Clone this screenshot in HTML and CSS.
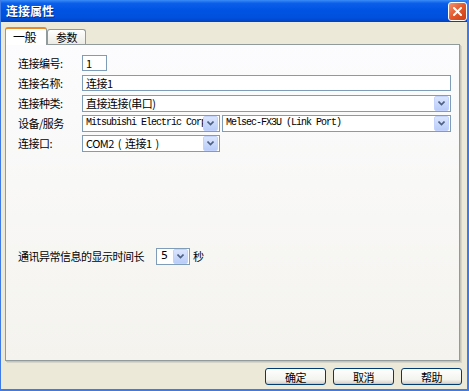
FILE: index.html
```html
<!DOCTYPE html>
<html lang="zh">
<head>
  <meta charset="UTF-8" />
  <title>连接属性</title>
  <link rel="stylesheet" href="styles.css">
</head>
<body>
  <div class="window">
    <div class="titlebar">
      <span class="title">连接属性</span>
      <span class="close">
        <svg width="9" height="9" viewBox="0 0 9 9"><path d="M1 1L8 8M8 1L1 8" stroke="#fff" stroke-width="2" stroke-linecap="square"/></svg>
      </span>
    </div>

    <div class="body">
      <div class="tabs">
        <div class="tab active">一般</div>
        <div class="tab">参数</div>
      </div>

      <div class="panel">
        <div class="row">
          <label>连接编号:</label>
          <div class="field w-id">1</div>
        </div>
        <div class="row">
          <label>连接名称:</label>
          <div class="field w-full">连接1</div>
        </div>
        <div class="row">
          <label>连接种类:</label>
          <div class="combo w-full">
            <span class="val">直接连接(串口)</span>
            <span class="drop"><svg width="7" height="5" viewBox="0 0 7 5"><path d="M0.5 0.5L3.5 3.5L6.5 0.5" fill="none" stroke="#4d6185" stroke-width="1.6"/></svg></span>
          </div>
        </div>
        <div class="row">
          <label>设备/服务</label>
          <div class="combo w-half">
            <span class="val mono">Mitsubishi Electric Corp</span>
            <span class="drop"><svg width="7" height="5" viewBox="0 0 7 5"><path d="M0.5 0.5L3.5 3.5L6.5 0.5" fill="none" stroke="#4d6185" stroke-width="1.6"/></svg></span>
          </div>
          <div class="combo w-rest">
            <span class="val mono">Melsec-FX3U (Link Port)</span>
            <span class="drop"><svg width="7" height="5" viewBox="0 0 7 5"><path d="M0.5 0.5L3.5 3.5L6.5 0.5" fill="none" stroke="#4d6185" stroke-width="1.6"/></svg></span>
          </div>
        </div>
        <div class="row">
          <label>连接口:</label>
          <div class="combo w-port">
            <span class="val">COM2 &nbsp;( &nbsp;连接1 &nbsp;)</span>
            <span class="drop"><svg width="7" height="5" viewBox="0 0 7 5"><path d="M0.5 0.5L3.5 3.5L6.5 0.5" fill="none" stroke="#4d6185" stroke-width="1.6"/></svg></span>
          </div>
        </div>

        <div class="row timeout">
          <span class="long-label">通讯异常信息的显示时间长</span>
          <div class="combo w-sec">
            <span class="val sans">5</span>
            <span class="drop"><svg width="7" height="5" viewBox="0 0 7 5"><path d="M0.5 0.5L3.5 3.5L6.5 0.5" fill="none" stroke="#4d6185" stroke-width="1.6"/></svg></span>
          </div>
          <span class="unit">秒</span>
        </div>
      </div>

      <div class="buttons">
        <button>确定</button>
        <button>取消</button>
        <button>帮助</button>
      </div>
    </div>
  </div>
</body>
</html>
```

FILE: styles.css
```css
body {
  margin: 0;
  font-family: "Noto Sans CJK SC", "DejaVu Sans", sans-serif;
  font-size: 11px;
  line-height: 14px;
  letter-spacing: -0.5px;
  color: #000;
  overflow: hidden;
}
.window {
  width: 469px;
  height: 391px;
  box-sizing: border-box;
  background: #ece9d8;
  border-left: 1px solid #3f7be6;
  border-right: 2px solid #3f7be6;
  border-bottom: 2px solid #3f7be6;
  display: flex;
  flex-direction: column;
  overflow: hidden;
}
.titlebar {
  height: 22px;
  flex: none;
  margin: 0 -2px 0 -1px;
  padding: 0 2px 0 6px;
  display: flex;
  align-items: center;
  background: linear-gradient(#3b8cf7 0%, #0a5ee9 15%, #0054e3 45%, #0050dc 80%, #0042c3 100%);
}
.title {
  color: #fff;
  font-weight: bold;
  font-size: 12px;
  text-shadow: 1px 1px 0 #0a2a8a;
  letter-spacing: 0;
}
.close {
  margin-left: auto;
  width: 17px;
  height: 17px;
  border: 1px solid #fff;
  border-radius: 3px;
  background: linear-gradient(135deg, #f39470 0%, #e4582c 50%, #cc3f18 100%);
  display: flex;
  align-items: center;
  justify-content: center;
}
.body {
  flex: 1;
  padding: 5px 5px 0 4px;
}
.tabs {
  display: flex;
  align-items: flex-end;
  height: 17px;
  position: relative;
  z-index: 1;
}
.tab {
  height: 14px;
  line-height: 15px;
  padding: 0 8px;
  white-space: nowrap;
  border: 1px solid #919b9c;
  border-bottom: none;
  border-radius: 3px 3px 0 0;
  background: linear-gradient(#fff, #ecebe6);
}
.tab.active {
  height: 16px;
  line-height: 16px;
  padding: 0 10px 0 7px;
  border-top: 2px solid #ffc83c;
  border-color: #e68b2c #919b9c #919b9c #919b9c;
  background: #fff;
  margin-bottom: -1px;
  font-size: 12px;
}
.panel {
  height: 307px;
  box-sizing: content-box;
  border: 1px solid #919b9c;
  box-shadow: 1px 1px 0 #c6c3b7, 2px 2px 0 #d7d4c9;
  background: linear-gradient(#fcfcfe, #f4f3ee);
  padding: 8px 0 0 12px;
  margin-right: 2px;
  overflow: hidden;
}
.row {
  display: flex;
  align-items: center;
  height: 20px;
}
.row label {
  width: 64px;
  flex: none;
  white-space: nowrap;
}
.field, .combo {
  box-sizing: border-box;
  height: 16px;
  border: 1px solid #7f9db9;
  background: #fff;
  display: flex;
  align-items: center;
  padding-left: 3px;
  white-space: nowrap;
  overflow: hidden;
}
.combo {
  height: 17px;
  padding-right: 0;
}
.val {
  flex: 1;
  overflow: hidden;
  white-space: nowrap;
}
.mono {
  font-family: "Liberation Mono", monospace;
  font-size: 10px;
  letter-spacing: -1px;
}
.sans {
  font-family: "DejaVu Sans", sans-serif;
  font-size: 11px;
  letter-spacing: 0;
}
.drop {
  flex: none;
  width: 13px;
  height: 13px;
  margin-right: 1px;
  border-radius: 2px;
  background: linear-gradient(#dbe5fd, #b9cdf8);
  border: 1px solid #c3d3fd;
  display: flex;
  align-items: center;
  justify-content: center;
}
.w-id { width: 25px; }
.w-full { width: 369px; }
.w-half { width: 138px; }
.w-rest { width: 229px; margin-left: 2px; }
.w-port { width: 138px; }
.w-sec { width: 34px; padding-left: 4px; }
.timeout {
  margin-top: 93px;
}
.long-label {
  width: 138px;
  flex: none;
  white-space: nowrap;
}
.unit {
  margin-left: 3px;
}
.buttons {
  display: flex;
  justify-content: flex-end;
  gap: 7px;
  margin-top: 7px;
}
.buttons button {
  box-sizing: border-box;
  width: 61px;
  height: 17px;
  padding: 0;
  font-family: "Noto Sans CJK SC", sans-serif;
  font-size: 11px;
  letter-spacing: -0.5px;
  line-height: 14px;
  color: #000;
  border: 1px solid #003c74;
  border-radius: 3px;
  background: linear-gradient(#ffffff, #f3f3ef 70%, #d6d0c5);
  box-shadow: inset 0 -1px 0 #d0cabe;
}
```
